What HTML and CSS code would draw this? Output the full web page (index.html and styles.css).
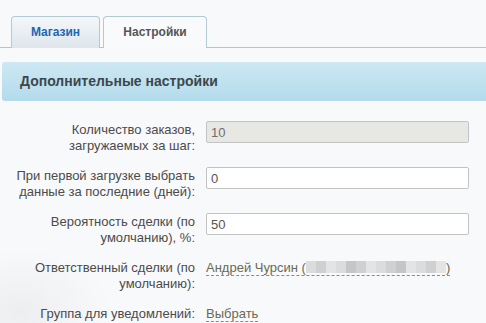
FILE: index.html
```html
<!DOCTYPE html>
<html lang="ru">
<head>
    <meta charset="UTF-8">
    <meta name="viewport" content="width=device-width, initial-scale=1.0">
    <title>Настройки</title>
    <link rel="stylesheet" href="styles.css">
</head>
<body>

<!-- Вкладки -->
<div class="tabs">
    <div class="tab">Магазин</div>
    <div class="tab tab-active">Настройки</div>
</div>

<!-- Заголовок раздела -->
<div class="section-title">Дополнительные настройки</div>

<!-- Форма -->
<div class="form">
    <div class="row">
        <div class="label">Количество заказов,<br>загружаемых за шаг:</div>
        <div class="field"><input type="text" value="10" class="input input-disabled" readonly></div>
    </div>
    <div class="row">
        <div class="label">При первой загрузке выбрать<br>данные за последние (дней):</div>
        <div class="field"><input type="text" value="0" class="input"></div>
    </div>
    <div class="row">
        <div class="label">Вероятность сделки (по<br>умолчанию), %:</div>
        <div class="field"><input type="text" value="50" class="input"></div>
    </div>
    <div class="row">
        <div class="label">Ответственный сделки (по<br>умолчанию):</div>
        <div class="field">
            <span class="link">Андрей Чурсин (<span class="blur"><i class="b1"></i><i class="b2"></i><i class="b3"></i><i class="b1"></i><i class="b4"></i><i class="b2"></i><i class="b3"></i><i class="b1"></i><i class="b2"></i><i class="b4"></i><i class="b3"></i><i class="b1"></i><i class="b2"></i><i class="b3"></i></span>)</span>
        </div>
    </div>
    <div class="row row-single">
        <div class="label">Группа для уведомлений:</div>
        <div class="field"><span class="link">Выбрать</span></div>
    </div>
</div>

</body>
</html>
```

FILE: styles.css
```css
/* Общие стили */
body {
    margin: 0;
    height: 323px;
    background-color: #f8f9fb;
    background-image: radial-gradient(ellipse 90px 60px at 20px 310px, #eceef0, rgba(248, 249, 251, 0));
    font-family: 'Liberation Sans', Arial, sans-serif;
    font-size: 13px;
    color: #4b4b4b;
    overflow: hidden;
}

/* Вкладки */
.tabs {
    display: flex;
    gap: 3px;
    padding: 16px 0 0 11px;
    border-bottom: 1px solid #a9c8d3;
    height: 31px;
}

.tab {
    box-sizing: border-box;
    width: 89px;
    height: 32px;
    border: 1px solid #b3cad3;
    border-bottom: none;
    border-radius: 4px 4px 0 0;
    background: linear-gradient(#f4f7f9, #dde6ec);
    color: #2166b0;
    font-weight: bold;
    font-size: 12px;
    text-align: center;
    line-height: 31px;
}

.tab-active {
    width: 104px;
    background: #f9fafb;
    color: #555;
    position: relative;
    z-index: 1;
}

/* Заголовок */
.section-title {
    margin: 14px 0 0 2px;
    height: 39px;
    padding-left: 18px;
    border-radius: 3px 0 0 3px;
    background: linear-gradient(#cde8f3, #b3dbeb);
    color: #3c474d;
    font-weight: bold;
    font-size: 14px;
    line-height: 39px;
}

/* Форма */
.form {
    padding-top: 21px;
}

.row {
    display: grid;
    grid-template-columns: 195px 263px;
    column-gap: 11px;
    min-height: 32px;
    margin-bottom: 14px;
    line-height: 16px;
}

.row-single {
    min-height: 16px;
    margin-bottom: 0;
}

.label {
    text-align: right;
    color: #4b4b4b;
}

.input {
    box-sizing: border-box;
    display: block;
    width: 263px;
    height: 22px;
    margin-top: -1px;
    padding: 0 4px;
    border: 1px solid #c3c3c3;
    border-radius: 2px;
    background: #fff;
    font-family: 'Liberation Sans', Arial, sans-serif;
    font-size: 13px;
    color: #555;
}

.input-disabled {
    background: #e7e7e3;
    color: #6f6f6f;
}

.link {
    color: #6a6a55;
    border-bottom: 1px dashed #8e8e70;
    white-space: nowrap;
}

/* Скрытый адрес */
.blur {
    display: inline-flex;
    vertical-align: -1px;
    height: 12px;
}

.blur i {
    display: inline-block;
    width: 10px;
    height: 12px;
}

.b1 { background: #dcdcdc; }
.b2 { background: #d0d0d0; }
.b3 { background: #e4e4e4; }
.b4 { background: #c6c6c6; }
```
